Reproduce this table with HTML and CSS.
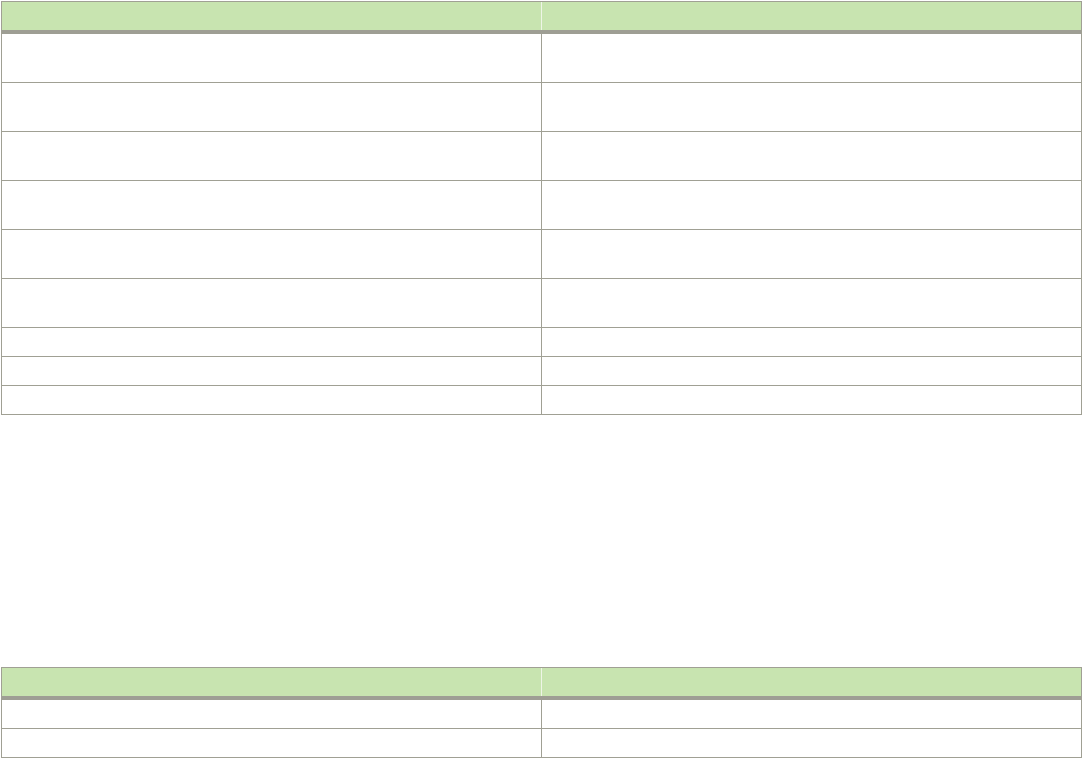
FILE: index.html
```html
<!DOCTYPE html>
<html lang="en">
<head>
<meta charset="utf-8">
<title>Tables</title>
<link rel="stylesheet" href="styles.css">
</head>
<body>
<div class="page">
  <div class="tbl">
    <div class="row head"><div class="cell"></div><div class="cell"></div></div>
    <div class="row tall"><div class="cell"></div><div class="cell"></div></div>
    <div class="row tall"><div class="cell"></div><div class="cell"></div></div>
    <div class="row tall"><div class="cell"></div><div class="cell"></div></div>
    <div class="row tall"><div class="cell"></div><div class="cell"></div></div>
    <div class="row tall"><div class="cell"></div><div class="cell"></div></div>
    <div class="row tall"><div class="cell"></div><div class="cell"></div></div>
    <div class="row"><div class="cell"></div><div class="cell"></div></div>
    <div class="row"><div class="cell"></div><div class="cell"></div></div>
    <div class="row"><div class="cell"></div><div class="cell"></div></div>
  </div>
  <div class="tbl second">
    <div class="row head"><div class="cell"></div><div class="cell"></div></div>
    <div class="row"><div class="cell"></div><div class="cell"></div></div>
    <div class="row"><div class="cell"></div><div class="cell"></div></div>
  </div>
</div>
</body>
</html>
```
FILE: styles.css
```css
html, body {
  margin: 0;
  padding: 0;
  background: #ffffff;
  font-family: "Liberation Sans", Arial, sans-serif;
}
.page {
  padding: 1px 0 0 1px;
}
.tbl {
  box-sizing: border-box;
  width: 1081px;
  border: 1px solid #a0a094;
  border-bottom: none;
  display: flex;
  flex-direction: column;
}
.second {
  margin-top: 252px;
}
.row {
  display: grid;
  grid-template-columns: 539px 1fr;
  height: 29px;
  box-sizing: border-box;
  border-bottom: 1px solid #a0a094;
}
.row.tall {
  height: 49px;
}
.row.head {
  height: 32px;
  background: #c8e4b0;
  border-bottom: 4px solid #9e9e94;
}
.cell + .cell {
  border-left: 1px solid #a0a094;
}
.head .cell + .cell {
  border-left: 1px solid #eef5e6;
}
```
